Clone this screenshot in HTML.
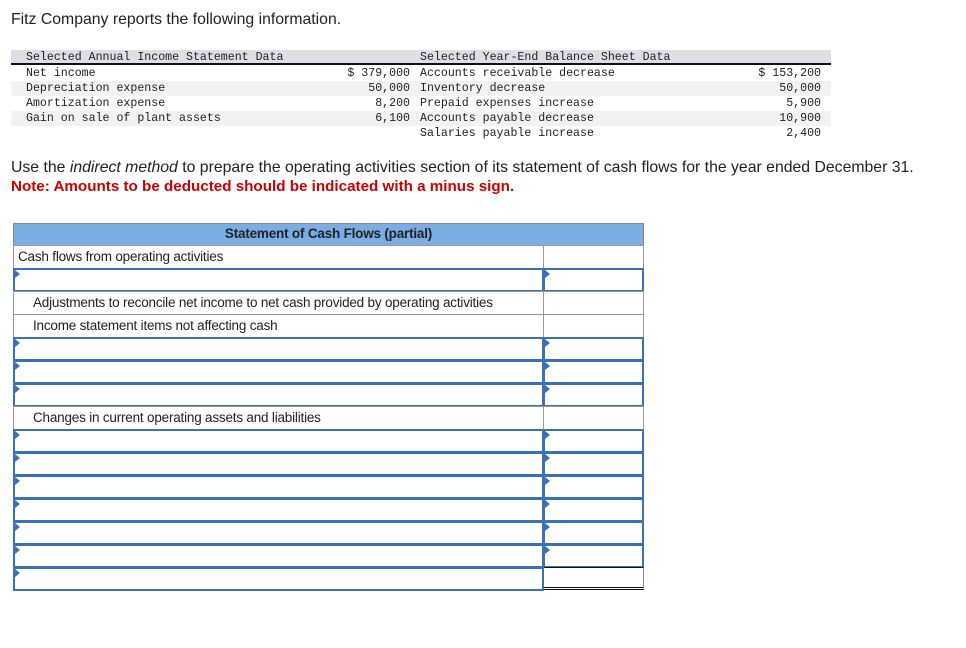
<!DOCTYPE html>
<html><head><style>
body{margin:0;width:966px;height:648px;background:#fff;position:relative;font-family:"Liberation Sans",sans-serif;overflow:hidden}
.a{position:absolute;white-space:pre}
.m{font-family:"Liberation Mono",monospace;font-size:11.6px;color:#222;line-height:15px}
.r{text-align:right}
.c{position:absolute;box-sizing:border-box}
.t{font-size:13.5px;color:#222;letter-spacing:-0.2px}
.in{border:2px solid #3a72b8;}
.arr{position:absolute;width:0;height:0;border-top:4px solid transparent;border-bottom:4px solid transparent;border-left:5px solid #3a72b8}
</style></head><body>
<div class="a" style="left:11px;top:11px;font-size:15.8px;color:#222">Fitz Company reports the following information.</div>

<div class="c" style="left:11px;top:50px;width:820px;height:15px;background:#dcdfe8;border-bottom:2px solid #111"></div>
<div class="c" style="left:11px;top:81px;width:820px;height:15px;background:#f2f2f2"></div>
<div class="c" style="left:11px;top:111px;width:820px;height:15px;background:#f2f2f2"></div>
<div class="a m" style="left:26px;top:50px">Selected Annual Income Statement Data</div>
<div class="a m" style="left:420px;top:50px">Selected Year-End Balance Sheet Data</div>
<div class="a m" style="left:26px;top:66px">Net income<br>Depreciation expense<br>Amortization expense<br>Gain on sale of plant assets</div>
<div class="a m r" style="left:270px;width:140px;top:66px">$ 379,000<br>50,000<br>8,200<br>6,100</div>
<div class="a m" style="left:420px;top:66px">Accounts receivable decrease<br>Inventory decrease<br>Prepaid expenses increase<br>Accounts payable decrease<br>Salaries payable increase</div>
<div class="a m r" style="left:680px;width:141px;top:66px">$ 153,200<br>50,000<br>5,900<br>10,900<br>2,400</div>

<div class="a" style="left:11px;top:159px;font-size:15.8px;color:#222">Use the <i>indirect method</i> to prepare the operating activities section of its statement of cash flows for the year ended December 31.</div>
<div class="a" style="left:11px;top:178px;font-size:15.2px;color:#c00;font-weight:bold">Note: Amounts to be deducted should be indicated with a minus sign.</div>

<div class="c" style="left:13px;top:223px;width:631px;height:23px;background:#7aade4;border:1px solid #888"></div>
<div class="a t" style="left:13px;width:631px;top:226px;text-align:center;font-weight:bold">Statement of Cash Flows (partial)</div>

<div id="rows"></div>
<script>
var rows=[[245,'t','Cash flows from operating activities',5],[268,'i'],[291,'t','Adjustments to reconcile net income to net cash provided by operating activities',20],[314,'t','Income statement items not affecting cash',20],[337,'i'],[360,'i'],[383,'i'],[406,'t','Changes in current operating assets and liabilities',20],[429,'i'],[452,'i'],[475,'i'],[498,'i'],[521,'i'],[544,'i'],[567,'l']];
var h='';
rows.forEach(function(r){var y=r[0];
if(r[1]=='t'){h+='<div class="c" style="left:13px;top:'+y+'px;width:531px;height:24px;border:1px solid #999"></div><div class="c" style="left:543px;top:'+y+'px;width:101px;height:24px;border:1px solid #999"></div><div class="a t" style="left:'+(13+r[3])+'px;top:'+(y+4)+'px">'+r[2]+'</div>';}
else{h+='<div class="c in" style="left:13px;top:'+y+'px;width:531px;height:24px"></div><div class="arr" style="left:15px;top:'+(y+2)+'px"></div>';
if(r[1]=='i'){h+='<div class="c in" style="left:543px;top:'+y+'px;width:101px;height:24px"></div><div class="arr" style="left:545px;top:'+(y+2)+'px"></div>';}
else{h+='<div class="c" style="left:544px;top:'+(y)+'px;width:100px;height:23px;border-top:1px solid #111;border-right:1px solid #888;border-bottom:3px double #111"></div>';}}
});
document.getElementById('rows').innerHTML=h;
</script>
</body></html>
